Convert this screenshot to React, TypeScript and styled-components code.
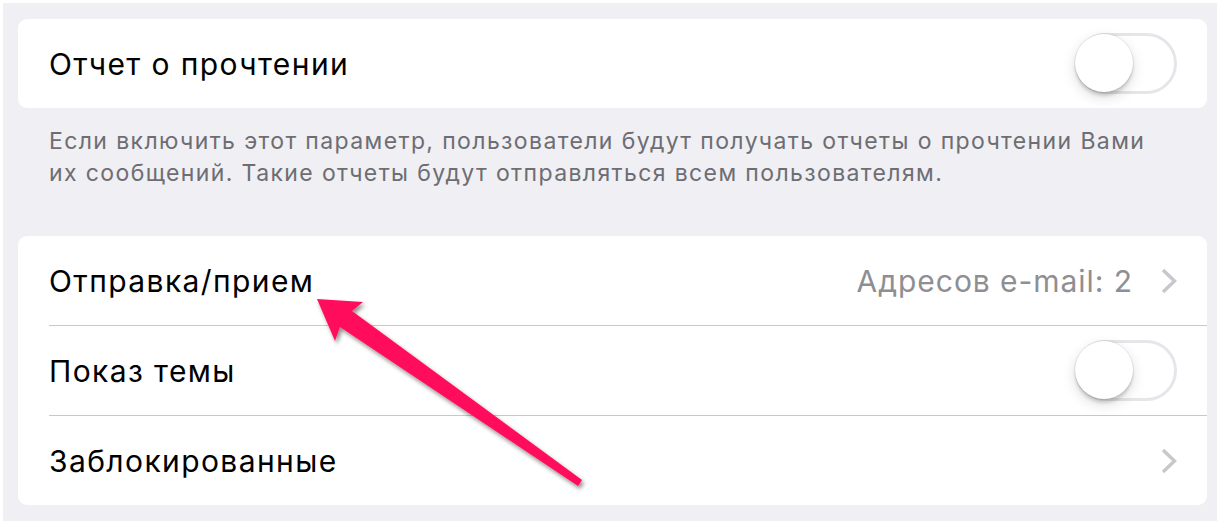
import React from "react";
import styled, { createGlobalStyle } from "styled-components";

const Global = createGlobalStyle`
  html, body { margin: 0; padding: 0; background: #ffffff; }
  body { font-family: Inter, Roboto, "Noto Sans", "Liberation Sans", sans-serif; -webkit-font-smoothing: antialiased; }
`;

const Page = styled.div`
  position: relative;
  margin: 3px;
  width: 1214px;
  height: 518px;
  box-sizing: border-box;
  background: #efeff4;
  padding-top: 16px;
  overflow: hidden;
`;

const Card = styled.div`
  margin: 0 10px 0 15px;
  background: #ffffff;
  border-radius: 9px;
  overflow: hidden;
`;

const Row = styled.div`
  padding-left: 31px;
`;

const RowInner = styled.div<{ $divider?: boolean }>`
  display: flex;
  align-items: center;
  height: 89px;
  padding-right: 30px;
  border-bottom: ${(p) => (p.$divider ? "1px solid #c8c7cc" : "none")};
`;

const Label = styled.span`
  flex: 1;
  font-size: 30px;
  color: #000000;
  letter-spacing: 1.4px;
`;

const Value = styled.span`
  font-size: 30px;
  color: #8e8e93;
  letter-spacing: 0.95px;
  margin-right: 28px;
`;

const Footer = styled.div`
  padding: 17px 20px 47px 46px;
  font-size: 23px;
  line-height: 32px;
  letter-spacing: 1.38px;
  color: #6d6d72;
  white-space: nowrap;
`;

const Track = styled.div`
  position: relative;
  width: 102px;
  height: 61px;
  box-sizing: border-box;
  border-radius: 31px;
  border: 3px solid #e6e6ea;
  background: #ffffff;
`;

const Knob = styled.div`
  position: absolute;
  left: -3px;
  top: -2px;
  width: 58px;
  height: 58px;
  border-radius: 50%;
  background: #ffffff;
  box-shadow: 0 0 0 1px rgba(0, 0, 0, 0.06), 0 4px 3px rgba(0, 0, 0, 0.12),
    0 5px 14px rgba(0, 0, 0, 0.14);
`;

const Arrow = styled.svg`
  position: absolute;
  left: -3px;
  top: -3px;
  pointer-events: none;
`;

const Toggle = () => (
  <Track>
    <Knob />
  </Track>
);

const Chevron = () => (
  <svg width="16" height="26" viewBox="0 0 16 26">
    <path d="M2 2 L13.5 13 L2 24" fill="none" stroke="#c7c7cc" strokeWidth="3.4" />
  </svg>
);

export default function App() {
  return (
    <>
      <Global />
      <Page>
        <Card>
          <Row>
            <RowInner>
              <Label>Отчет о прочтении</Label>
              <Toggle />
            </RowInner>
          </Row>
        </Card>
        <Footer>
          Если включить этот параметр, пользователи будут получать отчеты о прочтении Вами
          <br />
          их сообщений. Такие отчеты будут отправляться всем пользователям.
        </Footer>
        <Card>
          <Row>
            <RowInner $divider>
              <Label>Отправка/прием</Label>
              <Value>Адресов e-mail: 2</Value>
              <Chevron />
            </RowInner>
          </Row>
          <Row>
            <RowInner $divider>
              <Label>Показ темы</Label>
              <Toggle />
            </RowInner>
          </Row>
          <Row>
            <RowInner>
              <Label>Заблокированные</Label>
              <Chevron />
            </RowInner>
          </Row>
        </Card>
        <Arrow width="1220" height="524" viewBox="0 0 1220 524">
          <defs>
            <filter id="sh" x="-20%" y="-20%" width="140%" height="140%">
              <feDropShadow dx="2" dy="3" stdDeviation="2" floodColor="#000" floodOpacity="0.45" />
            </filter>
          </defs>
          <polygon
            points="317,299 363,302 352,311 582,480 578,486 340,327 335,341"
            fill="#ff0f5c"
            filter="url(#sh)"
          />
        </Arrow>
      </Page>
    </>
  );
}
